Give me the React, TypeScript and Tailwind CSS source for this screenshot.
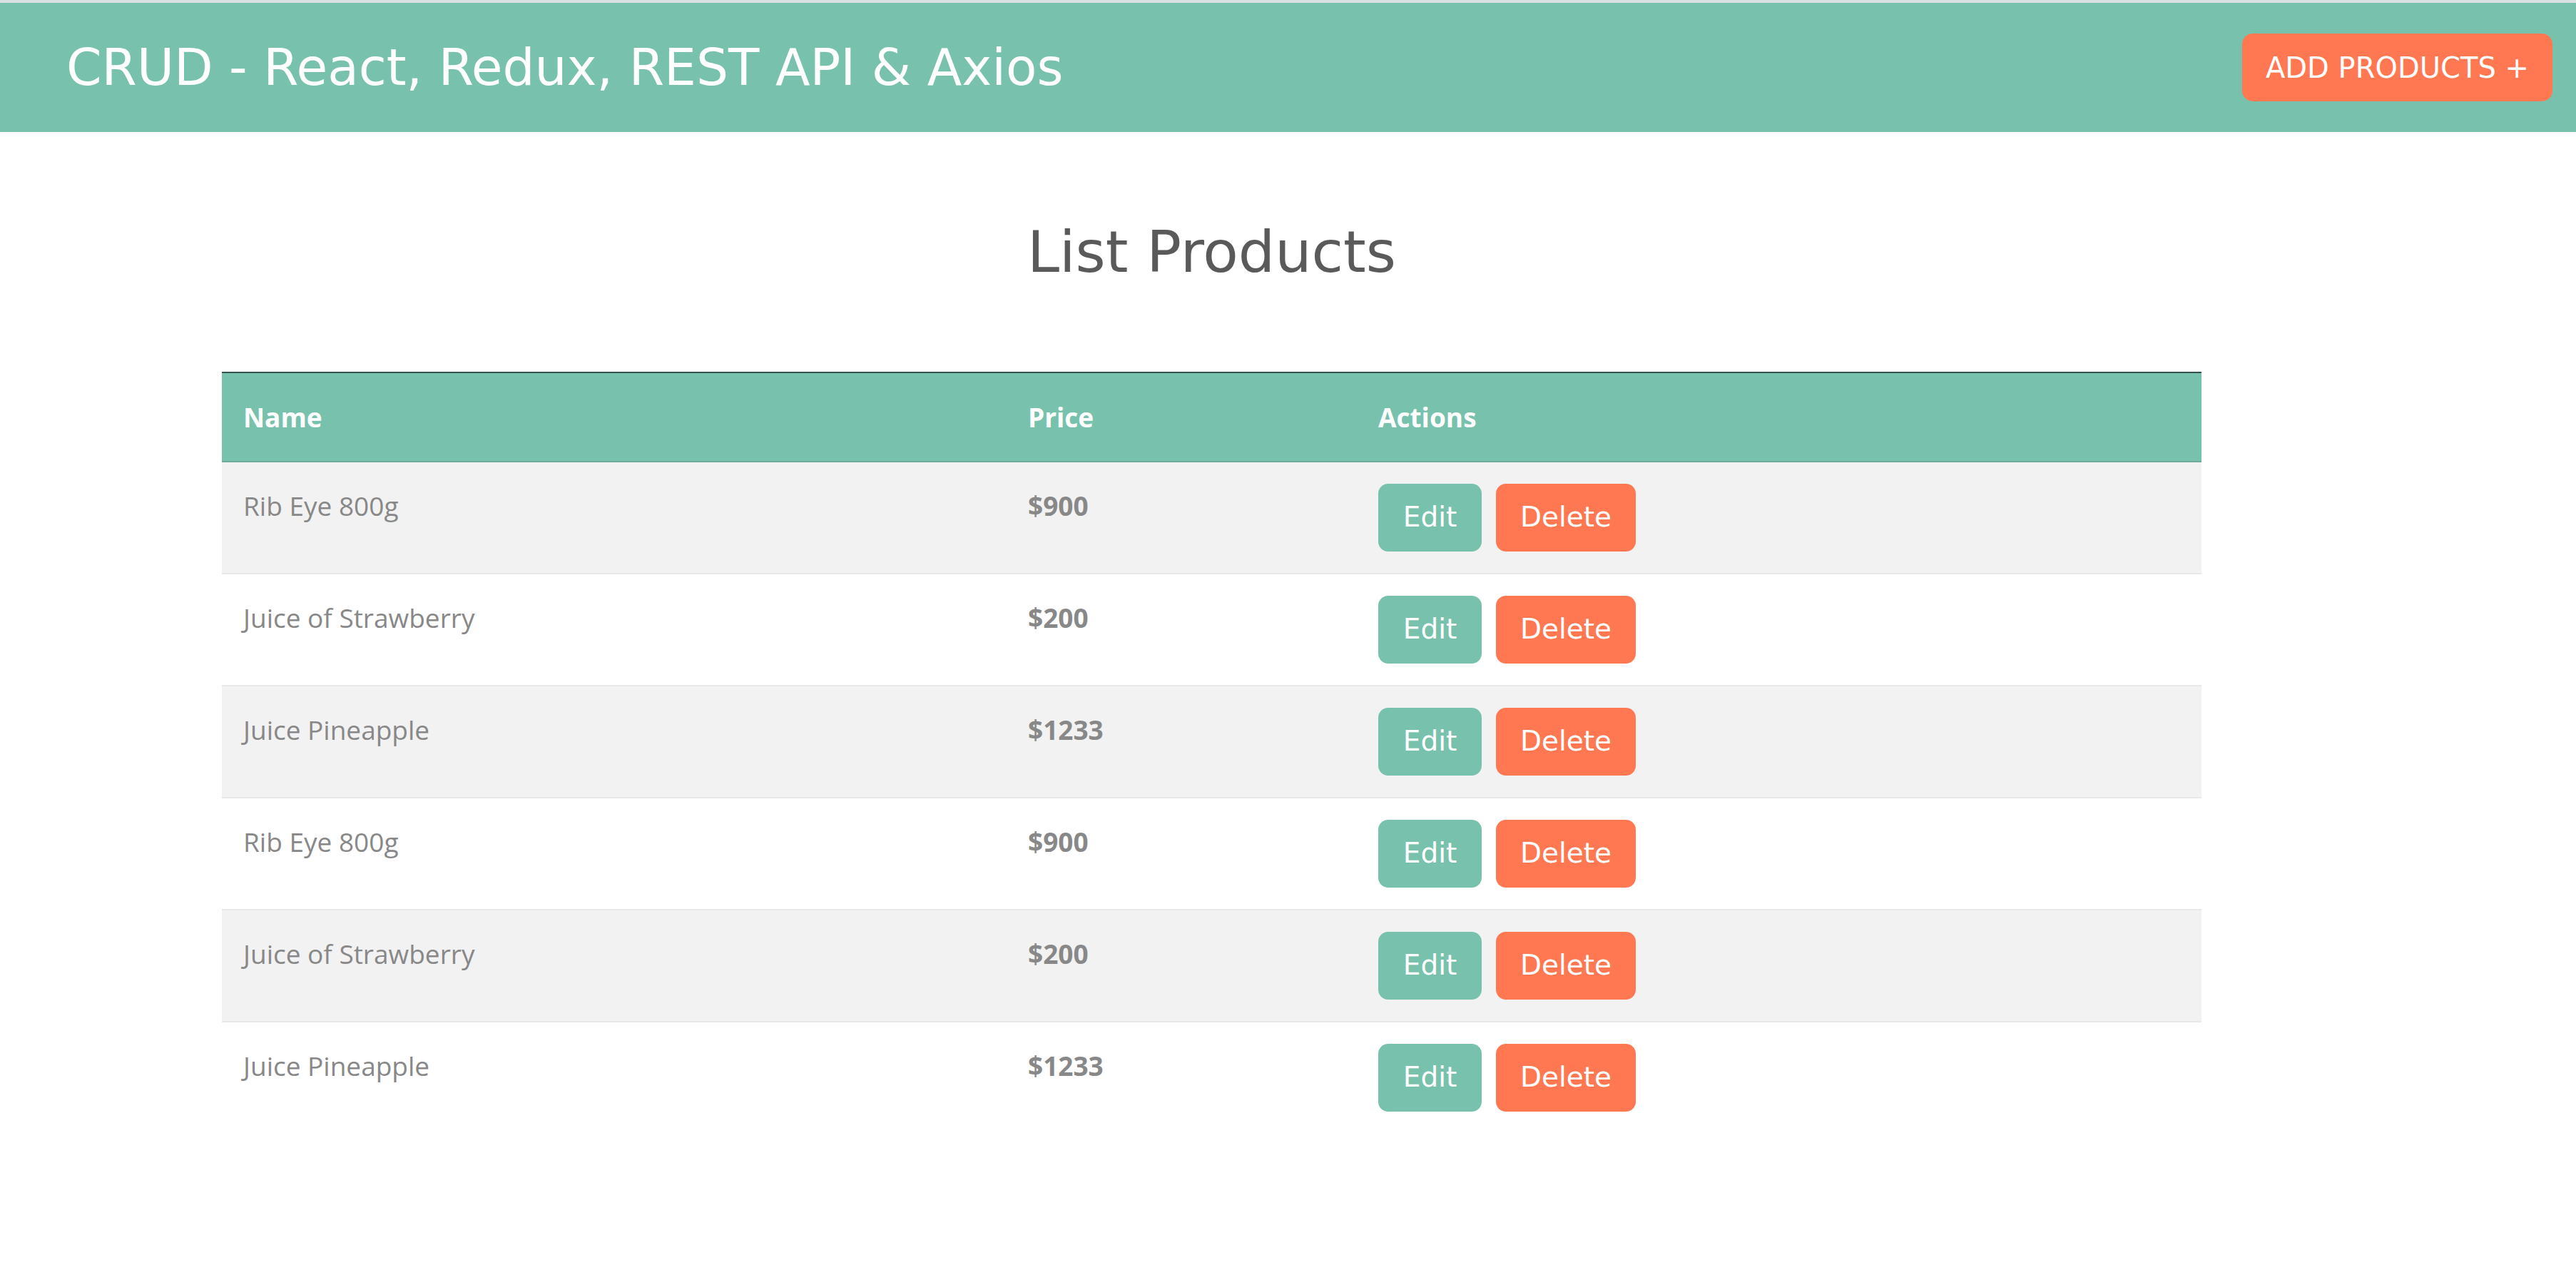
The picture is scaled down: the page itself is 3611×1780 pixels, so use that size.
const products = [
  { name: 'Rib Eye 800g', price: 900 },
  { name: 'Juice of Strawberry', price: 200 },
  { name: 'Juice Pineapple', price: 1233 },
  { name: 'Rib Eye 800g', price: 900 },
  { name: 'Juice of Strawberry', price: 200 },
  { name: 'Juice Pineapple', price: 1233 },
];

const heading = { fontFamily: '"DejaVu Sans", "Open Sans", sans-serif' };
const body = { fontFamily: '"Open Sans", "Liberation Sans", sans-serif' };

export default function App() {
  return (
    <div className="min-h-screen bg-white" style={body}>
      <div className="h-[4px] bg-[#dcdfe2]" />
      <nav className="flex h-[181px] items-center justify-between bg-[#78c2ad] pl-[93px] pr-[33px]">
        <h1 className="text-[71px] leading-none font-normal text-white" style={heading}>
          CRUD - React, Redux, REST API &amp; Axios
        </h1>
        <button
          className="flex h-[95px] w-[435px] items-center justify-center rounded-[15px] bg-[#ff7851] text-[40px] text-white"
          style={heading}>
          ADD PRODUCTS +
        </button>
      </nav>

      <main className="pl-[311px]">
        <div className="w-[2775px]">
          <h2
            className="mt-[120px] mb-[120px] text-center text-[81px] leading-[96px] font-normal text-[#5a5a5a]"
            style={heading}>
            List Products
          </h2>
          <table className="w-full border-collapse text-[37px]">
            <thead>
              <tr className="border-t-2 border-b-2 border-t-[#33524b] border-b-[#6eab9a] bg-[#78c2ad]">
                <th className="h-[125px] w-[1100px] px-[30px] text-left font-bold text-white">Name</th>
                <th className="h-[125px] w-[491px] px-[30px] text-left font-bold text-white">Price</th>
                <th className="h-[125px] px-[30px] text-left font-bold text-white">Actions</th>
              </tr>
            </thead>
            <tbody>
              {products.map((p, i) => (
                <tr
                  key={i}
                  className={`border-t-2 border-[#e6e9e8] ${i % 2 === 0 ? 'bg-[#f2f2f2]' : 'bg-white'}`}>
                  <td className="px-[30px] pt-[33px] align-top leading-[55px] text-[#888888]">{p.name}</td>
                  <td className="px-[30px] pt-[33px] align-top leading-[55px] font-bold text-[#888888]">
                    ${p.price}
                  </td>
                  <td className="px-[30px] py-[30px] align-top">
                    <div className="flex gap-[20px]">
                      <button
                        className="flex h-[95px] w-[145px] items-center justify-center rounded-[14px] bg-[#78c2ad] text-[39px] text-white"
                        style={heading}>
                        Edit
                      </button>
                      <button
                        className="flex h-[95px] w-[196px] items-center justify-center rounded-[14px] bg-[#ff7851] text-[39px] text-white"
                        style={heading}>
                        Delete
                      </button>
                    </div>
                  </td>
                </tr>
              ))}
            </tbody>
          </table>
        </div>
      </main>
    </div>
  );
}
